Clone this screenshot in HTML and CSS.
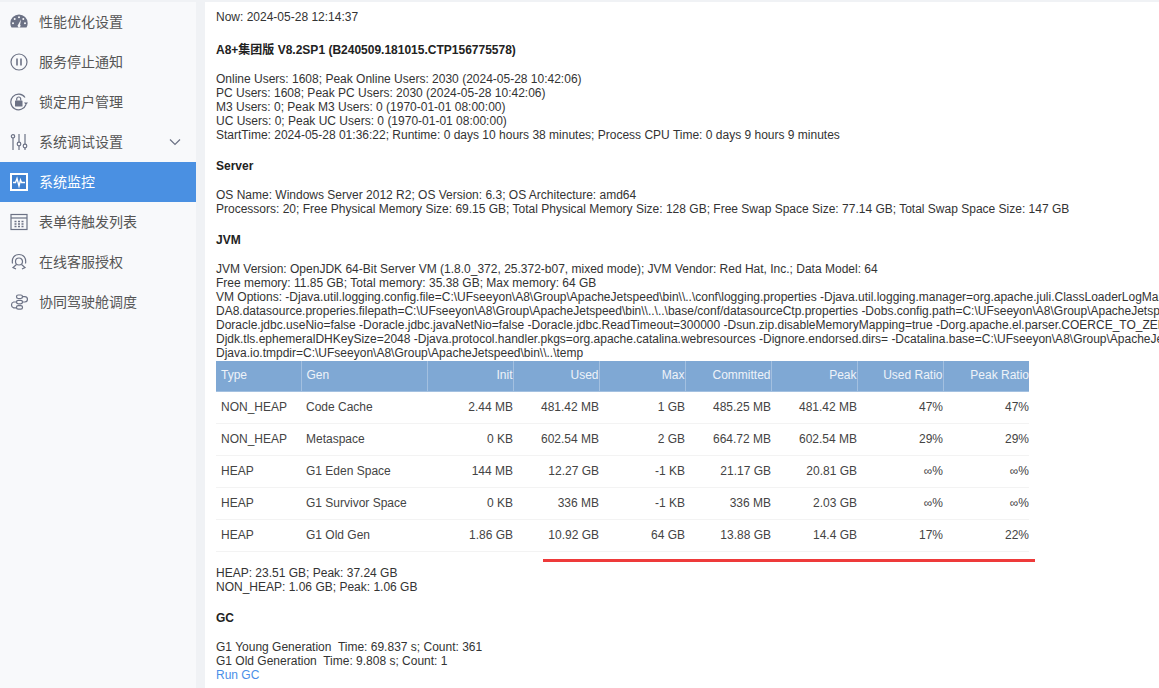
FILE: index.html
```html
<!DOCTYPE html>
<html>
<head>
    <title>系统监控</title>
    <link rel="stylesheet" href="styles.css">
</head>
<body>
    <div class="layout">
        <ul class="side-menu">
            <li class="menu-item">
                <svg class="menu-icon" viewBox="0 0 18 18"><path class="fill" fill-rule="evenodd" d="M9 1.500a8.700 8.700 0 0 0-8.700 8.700c0 1.500.4 3 1.200 4.300h15c.8-1.300 1.200-2.800 1.200-4.300A8.700 8.700 0 0 0 9 1.500zM9 3.200a1 1 0 1 1 0 2 1 1 0 0 1 0-2zM4.700 5a1 1 0 1 1 0 2 1 1 0 0 1 0-2zm8.600 0a1 1 0 1 1 0 2 1 1 0 0 1 0-2zM3 9.300a1 1 0 1 1 0 2 1 1 0 0 1 0-2zm12 0a1 1 0 1 1 0 2 1 1 0 0 1 0-2zM11 6.500l-.9 5.200a1.500 1.500 0 1 1-2 0z"/></svg>
                <span>性能优化设置</span>
            </li>
            <li class="menu-item">
                <svg class="menu-icon" viewBox="0 0 18 18"><circle class="line" cx="9" cy="9" r="8"/><path class="line thick" d="M7 5.500v7M11 5.500v7"/></svg>
                <span>服务停止通知</span>
            </li>
            <li class="menu-item">
                <svg class="menu-icon" viewBox="0 0 18 18"><path class="line" d="M16 11.500A7.800 7.800 0 1 1 15 4.500"/><path class="fill" d="M14 9.500h4l-2 2.500z"/><rect class="fill" x="5" y="7.500" width="7.500" height="6" rx=".6"/><path class="line" d="M6.700 7.500V6a2 2 0 0 1 4 0v1.500"/></svg>
                <span>锁定用户管理</span>
            </li>
            <li class="menu-item">
                <svg class="menu-icon" viewBox="0 0 18 18"><path class="line" d="M3 5v12M9 1v8M9 13v4M15 1v10M15 15v2"/><circle class="line" cx="3" cy="3.300" r="1.700"/><circle class="line" cx="9" cy="11" r="1.800"/><circle class="line" cx="15" cy="13" r="1.800"/></svg>
                <span>系统调试设置</span>
                <svg class="menu-arrow" viewBox="0 0 12 8"><path class="line" d="M1 1.500l5 5 5-5"/></svg>
            </li>
            <li class="menu-item active">
                <svg class="menu-icon" viewBox="0 0 18 18"><rect class="frame" x="1" y="1" width="16" height="16"/><path class="pulse" d="M3 9.500h2.500l1.500-4 2 7.500 1.500-6 1 2.500h3.500"/></svg>
                <span>系统监控</span>
            </li>
            <li class="menu-item">
                <svg class="menu-icon" viewBox="0 0 18 18"><rect class="line" x="1" y="1.500" width="16" height="15"/><path class="line" d="M1 5h16"/><path class="dots" d="M4.500 8.500h2M8 8.500h2M11.500 8.500h2M4.500 11h2M8 11h2M11.500 11h2M4.500 13.500h2M8 13.500h2M11.500 13.500h2"/></svg>
                <span>表单待触发列表</span>
            </li>
            <li class="menu-item">
                <svg class="menu-icon" viewBox="0 0 18 18"><path class="line" d="M2.500 10.500C1.500 5 4.500 1.500 9 1.500s7.500 3.500 6.500 9"/><path class="line" d="M5.500 8.500a3.500 3.500 0 1 1 7 0c0 2-1.500 3.500-3.500 3.500s-3.500-1.500-3.500-3.500z"/><path class="line" d="M6.500 11.500L3 14.500l3 1.500M11.500 11.500l3.500 3-3 1.500"/></svg>
                <span>在线客服授权</span>
            </li>
            <li class="menu-item">
                <svg class="menu-icon" viewBox="0 0 18 18"><rect class="line" x="6.500" y="2" width="6" height="3.500" rx="1.700"/><rect class="line" x="6.500" y="7.300" width="6" height="3.500" rx="1.700"/><rect class="line" x="6.500" y="12.600" width="6" height="3.500" rx="1.700"/><path class="line" d="M12.500 3.700h2.300a2.600 2.600 0 0 1 0 5.300h-2.300M6.500 9H3.700a3 3 0 0 0 0 5.800h2.800"/></svg>
                <span>协同驾驶舱调度</span>
            </li>
        </ul>

        <div class="content">
            <p class="now">Now: 2024-05-28 12:14:37</p>
            <p class="head"><b>A8+集团版 V8.2SP1 (B240509.181015.CTP156775578)</b></p>
            <p>
                Online Users: 1608; Peak Online Users: 2030 (2024-05-28 10:42:06)<br>
                PC Users: 1608; Peak PC Users: 2030 (2024-05-28 10:42:06)<br>
                M3 Users: 0; Peak M3 Users: 0 (1970-01-01 08:00:00)<br>
                UC Users: 0; Peak UC Users: 0 (1970-01-01 08:00:00)<br>
                StartTime: 2024-05-28 01:36:22; Runtime: 0 days 10 hours 38 minutes; Process CPU Time: 0 days 9 hours 9 minutes
            </p>
            <p class="head"><b>Server</b></p>
            <p>
                OS Name: Windows Server 2012 R2; OS Version: 6.3; OS Architecture: amd64<br>
                Processors: 20; Free Physical Memory Size: 69.15 GB; Total Physical Memory Size: 128 GB; Free Swap Space Size: 77.14 GB; Total Swap Space Size: 147 GB
            </p>
            <p class="head"><b>JVM</b></p>
            <p class="nowrap">
                JVM Version: OpenJDK 64-Bit Server VM (1.8.0_372, 25.372-b07, mixed mode); JVM Vendor: Red Hat, Inc.; Data Model: 64<br>
                Free memory: 11.85 GB; Total memory: 35.38 GB; Max memory: 64 GB<br>
                VM Options: -Djava.util.logging.config.file=C:\UFseeyon\A8\Group\ApacheJetspeed\bin\\..\conf\logging.properties -Djava.util.logging.manager=org.apache.juli.ClassLoaderLogManager<br>
                DA8.datasource.properies.filepath=C:\UFseeyon\A8\Group\ApacheJetspeed\bin\\..\..\base/conf/datasourceCtp.properties -Dobs.config.path=C:\UFseeyon\A8\Group\ApacheJetspeed\bin<br>
                Doracle.jdbc.useNio=false -Doracle.jdbc.javaNetNio=false -Doracle.jdbc.ReadTimeout=300000 -Dsun.zip.disableMemoryMapping=true -Dorg.apache.el.parser.COERCE_TO_ZERO=false<br>
                Djdk.tls.ephemeralDHKeySize=2048 -Djava.protocol.handler.pkgs=org.apache.catalina.webresources -Dignore.endorsed.dirs= -Dcatalina.base=C:\UFseeyon\A8\Group\ApacheJetspeed<br>
                Djava.io.tmpdir=C:\UFseeyon\A8\Group\ApacheJetspeed\bin\\..\temp
            </p>
            <div class="table-wrap">
                <table class="mem-table">
                    <thead>
                        <tr>
                            <th class="col-type">Type</th><th class="col-gen">Gen</th>
                            <th>Init</th><th>Used</th><th>Max</th><th>Committed</th><th>Peak</th><th>Used Ratio</th><th>Peak Ratio</th>
                        </tr>
                    </thead>
                    <tbody>
                        <tr><td class="col-type">NON_HEAP</td><td class="col-gen">Code Cache</td><td>2.44 MB</td><td>481.42 MB</td><td>1 GB</td><td>485.25 MB</td><td>481.42 MB</td><td>47%</td><td>47%</td></tr>
                        <tr><td class="col-type">NON_HEAP</td><td class="col-gen">Metaspace</td><td>0 KB</td><td>602.54 MB</td><td>2 GB</td><td>664.72 MB</td><td>602.54 MB</td><td>29%</td><td>29%</td></tr>
                        <tr><td class="col-type">HEAP</td><td class="col-gen">G1 Eden Space</td><td>144 MB</td><td>12.27 GB</td><td>-1 KB</td><td>21.17 GB</td><td>20.81 GB</td><td>∞%</td><td>∞%</td></tr>
                        <tr><td class="col-type">HEAP</td><td class="col-gen">G1 Survivor Space</td><td>0 KB</td><td>336 MB</td><td>-1 KB</td><td>336 MB</td><td>2.03 GB</td><td>∞%</td><td>∞%</td></tr>
                        <tr><td class="col-type">HEAP</td><td class="col-gen">G1 Old Gen</td><td>1.86 GB</td><td>10.92 GB</td><td>64 GB</td><td>13.88 GB</td><td>14.4 GB</td><td>17%</td><td>22%</td></tr>
                    </tbody>
                </table>
                <div class="red-mark"></div>
            </div>
            <p>
                HEAP: 23.51 GB; Peak: 37.24 GB<br>
                NON_HEAP: 1.06 GB; Peak: 1.06 GB
            </p>
            <p class="head"><b>GC</b></p>
            <p>
                G1 Young Generation&nbsp; Time: 69.837 s; Count: 361<br>
                G1 Old Generation&nbsp; Time: 9.808 s; Count: 1<br>
                <a href="#">Run GC</a>
            </p>
        </div>
    </div>
</body>
</html>
```
FILE: styles.css
```css
html, body { margin: 0; padding: 0; height: 100%; overflow: hidden; }
body { font-family: "Liberation Sans", Arial, "Noto Sans CJK SC", sans-serif; font-size: 12px; color: #333; background: #f0f2f5; }
a { color: #4a8fe8; text-decoration: none; }

.layout { display: flex; height: 688px; padding-top: 2px; box-sizing: border-box; }

.side-menu { width: 196px; flex: none; margin: 0 9px 0 0; padding: 0; list-style: none; background: #f8f9fb; }
.menu-item { display: flex; align-items: center; height: 40px; padding-left: 10px; font-size: 14px; color: #555; font-family: "Noto Sans CJK SC", sans-serif; }
.menu-item span { margin: -2px 0 0 11px; flex: 1; }
.menu-item.active { background: #4a90e2; color: #fff; }
.menu-icon { width: 18px; height: 18px; flex: none; margin-top: -1px; }
.menu-arrow { width: 12px; height: 8px; margin-right: 15px; }
.fill { fill: #6c7285; }
.line { fill: none; stroke: #6c7285; stroke-width: 1.2; }
.line.thick { stroke-width: 1.6; }
.dots { fill: none; stroke: #6c7285; stroke-width: 1.500; }
.frame { fill: #3f80cf; stroke: #fff; stroke-width: 2; }
.pulse { fill: none; stroke: #fff; stroke-width: 1.400; }

.content { flex: 1; min-width: 0; background: #fff; padding: 8px 0 0 11px; line-height: 14px; overflow: hidden; }
.content p { margin: 0 0 16px; }
.content p.now { margin-bottom: 18px; }
.content p.head { padding-top: 1px; margin-bottom: 15px; color: #222; }
.content p.nowrap { margin-bottom: 1px; white-space: nowrap; }

.table-wrap { position: relative; margin-bottom: 14px; }
.mem-table { border-collapse: collapse; table-layout: fixed; width: 813px; }
.mem-table th { height: 28px; padding: 0 0 2px; background: #7fa8d4; color: #eef3f9; font-weight: normal; text-align: right; border-left: 1px solid #a3c0e0; border-bottom: 1px solid #a3c0e0; }
.mem-table th:first-child { border-left: none; }
.mem-table td { height: 29px; padding: 0 0 2px; text-align: right; border-bottom: 1px solid #f3f3f3; color: #444; }
.mem-table .col-type { width: 85px; padding-left: 5px; text-align: left; box-sizing: border-box; }
.mem-table .col-gen { width: 126px; padding-left: 5px; text-align: left; box-sizing: border-box; }
.red-mark { position: absolute; left: 327px; top: 198px; width: 492px; height: 3px; background: #ee3a3a; }
```
